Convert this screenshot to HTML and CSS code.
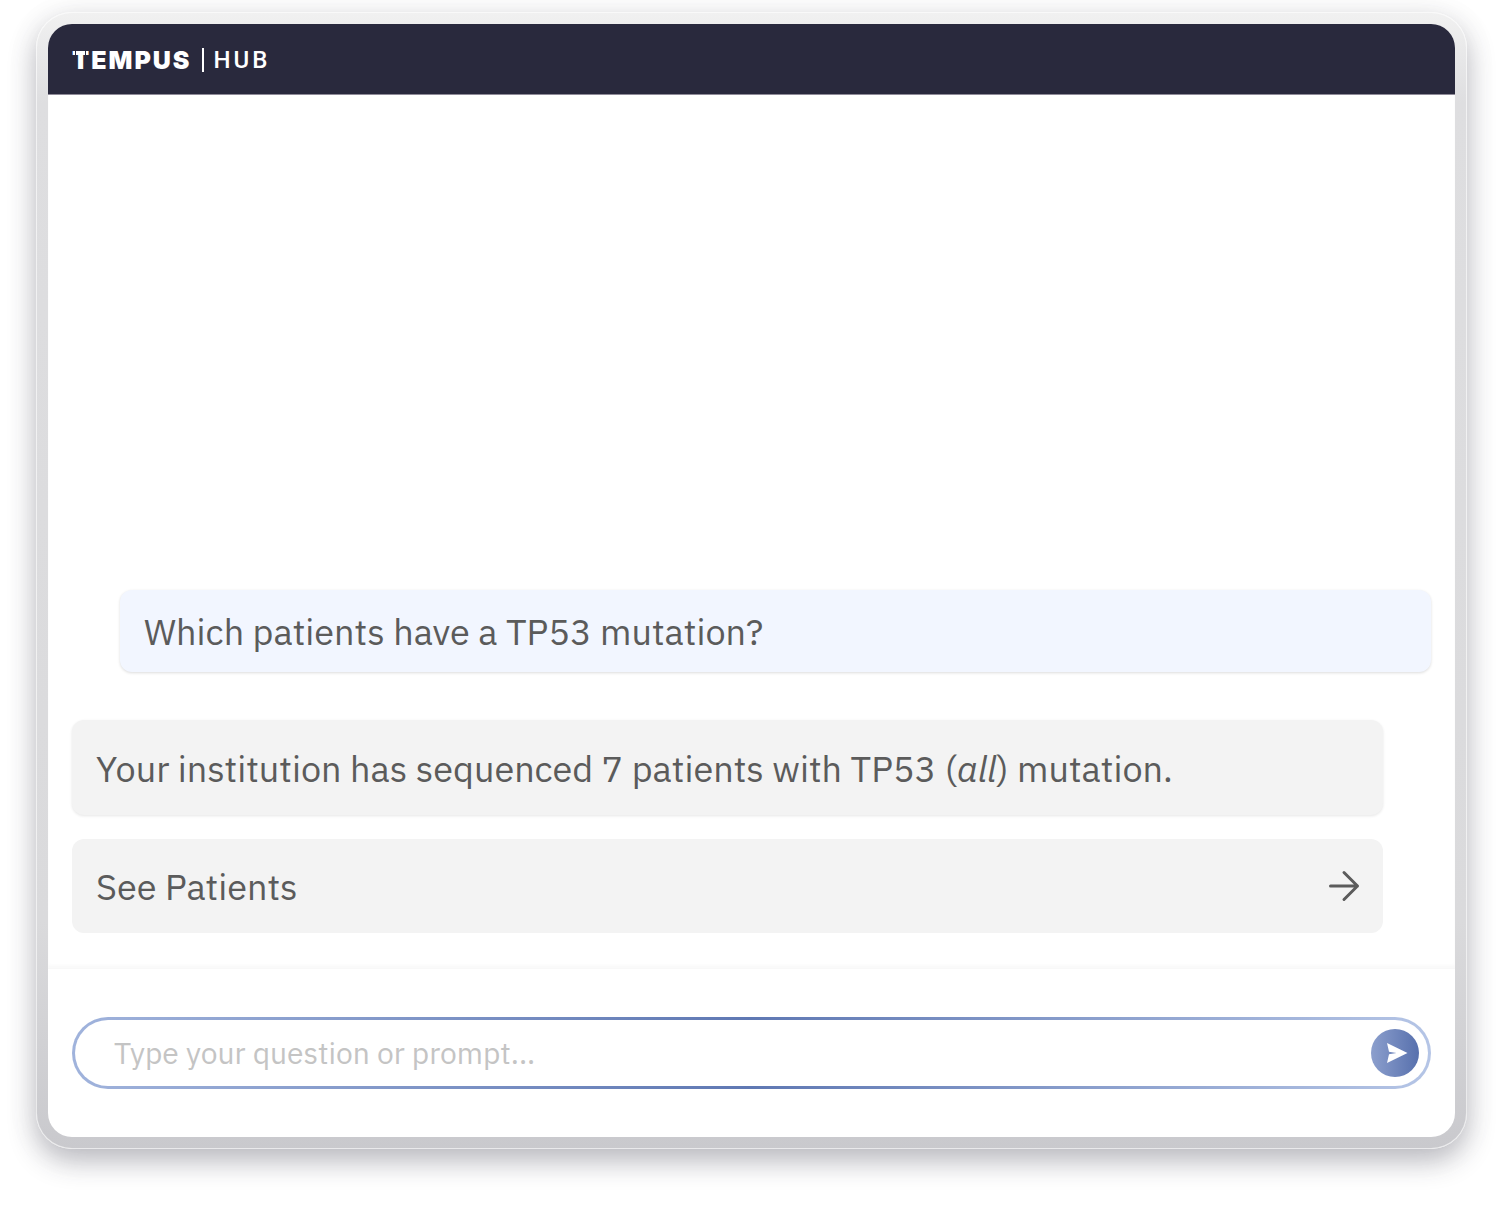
FILE: index.html
```html
<!DOCTYPE html>
<html lang="en">
<head>
<meta charset="utf-8">
<meta name="viewport" content="width=device-width, initial-scale=1">
<title>Tempus Hub</title>
<link rel="stylesheet" href="styles.css">
</head>
<body>
<div class="frame">
  <main class="panel">
    <header class="topbar">
      <span class="brand"><span class="brand-initial">T</span>EMPUS</span>
      <span class="divider"></span>
      <span class="product">HUB</span>
    </header>
    <section class="thread">
      <p class="message question">Which patients have a TP53 mutation?</p>
      <p class="message answer">Your institution has sequenced 7 patients with TP53 (<em>all</em>) mutation.</p>
      <a class="message action" href="#patients">
        <span>See Patients</span>
        <svg class="arrow" viewBox="0 1 32 32" aria-hidden="true"><path d="M3.500 16H30.500M17 2.500L30.500 16L17 29.500"/></svg>
      </a>
    </section>
    <form class="composer">
      <div class="field">
        <input class="prompt" type="text" aria-label="Question or prompt" placeholder="Type your question or prompt...">
        <button class="send" type="button" aria-label="Send">
          <svg viewBox="0 0 48 48" aria-hidden="true"><path d="M16 14L36.500 24L16 34L18 25.300L25.500 24L18 22.700Z"/></svg>
        </button>
      </div>
    </form>
  </main>
</div>
</body>
</html>
```
FILE: styles.css
```css
* {
  box-sizing: border-box;
}

body {
  margin: 0;
  min-height: 100vh;
  padding: 12px 36px 60px;
  display: flex;
  background: #fff;
  color: #5b5b5b;
  font-family: "IBM Plex Sans", Roboto, sans-serif;
  font-size: 36px;
  line-height: 48px;
}

.frame {
  flex: 1;
  display: flex;
  padding: 11px;
  border: 1px solid rgba(255, 255, 255, 0.6);
  border-radius: 36px;
  background: linear-gradient(#f1f1f1, #dedee0 8%, #dadadc 80%, #c9c9cd) border-box;
  box-shadow: 0 12px 28px rgba(40, 40, 60, 0.3), 0 4px 36px rgba(0, 0, 0, 0.05);
}

.panel {
  flex: 1;
  display: flex;
  flex-direction: column;
  overflow: hidden;
  border-radius: 24px;
  background: #fff;
}

.topbar {
  display: flex;
  align-items: center;
  height: 71px;
  padding: 2px 24px 0;
  border-bottom: 1px solid #8f8b99;
  background: #29293d;
  color: #fff;
  font-family: Roboto, sans-serif;
  font-size: 24px;
  line-height: 24px;
}

.brand {
  font-family: Inter, sans-serif;
  font-size: 25px;
  font-weight: 900;
  letter-spacing: 2px;
}

.brand-initial {
  position: relative;
}

.brand-initial::before,
.brand-initial::after {
  content: "";
  position: absolute;
  top: 4px;
  width: 1px;
  height: 8px;
  background: #29293d;
}

.brand-initial::before {
  left: 3px;
}

.brand-initial::after {
  right: 5px;
}

.divider {
  width: 2px;
  height: 24px;
  margin: 0 10px;
  background: #fff;
}

.product {
  font-weight: 500;
  letter-spacing: 3px;
}

.thread {
  flex: 1;
  display: flex;
  flex-direction: column;
  justify-content: flex-end;
  padding: 24px 24px 35px;
  border-bottom: 1px solid #f8f8f8;
  box-shadow: inset 0 -3px 3px #fafafa;
}

.message {
  margin: 0;
  padding: 25px 24px 22px;
  border-radius: 12px;
  background: #f3f3f3;
}

.question {
  margin: 0 0 48px 48px;
  padding: 18px 24px 16px;
  background: #f2f6ff;
  box-shadow: 0 1px 3px rgba(0, 0, 0, 0.14);
}

.answer {
  margin: 0 48px 24px 0;
  box-shadow: 0 1px 3px rgba(0, 0, 0, 0.1);
}

.action {
  display: flex;
  align-items: center;
  justify-content: space-between;
  margin-right: 48px;
  padding: 24px 24px 22px;
  color: inherit;
  text-decoration: none;
}

.arrow {
  width: 32px;
  height: 32px;
  overflow: visible;
  fill: none;
  stroke: #5b5b5b;
  stroke-width: 3;
  stroke-linecap: round;
  stroke-linejoin: round;
}

.composer {
  padding: 48px 24px;
}

.field {
  display: flex;
  align-items: center;
  height: 72px;
  padding: 0 9px 0 39px;
  border: 3px solid transparent;
  border-radius: 36px;
  background: linear-gradient(#fff, #fff) padding-box, linear-gradient(90deg, #a0b3dc, #5f78b3 50%, #b5c5e6) border-box;
}

.prompt {
  flex: 1;
  min-width: 0;
  padding: 0;
  border: 0;
  outline: 0;
  background: none;
  color: inherit;
  font: inherit;
  font-size: 30px;
}

.prompt::placeholder {
  color: #c4c4c4;
  opacity: 1;
}

.send {
  width: 48px;
  height: 48px;
  padding: 0;
  border: 0;
  border-radius: 50%;
  background: linear-gradient(90deg, #8c9fcd, #5770ad);
}

.send svg {
  display: block;
  fill: #fff;
}
```
